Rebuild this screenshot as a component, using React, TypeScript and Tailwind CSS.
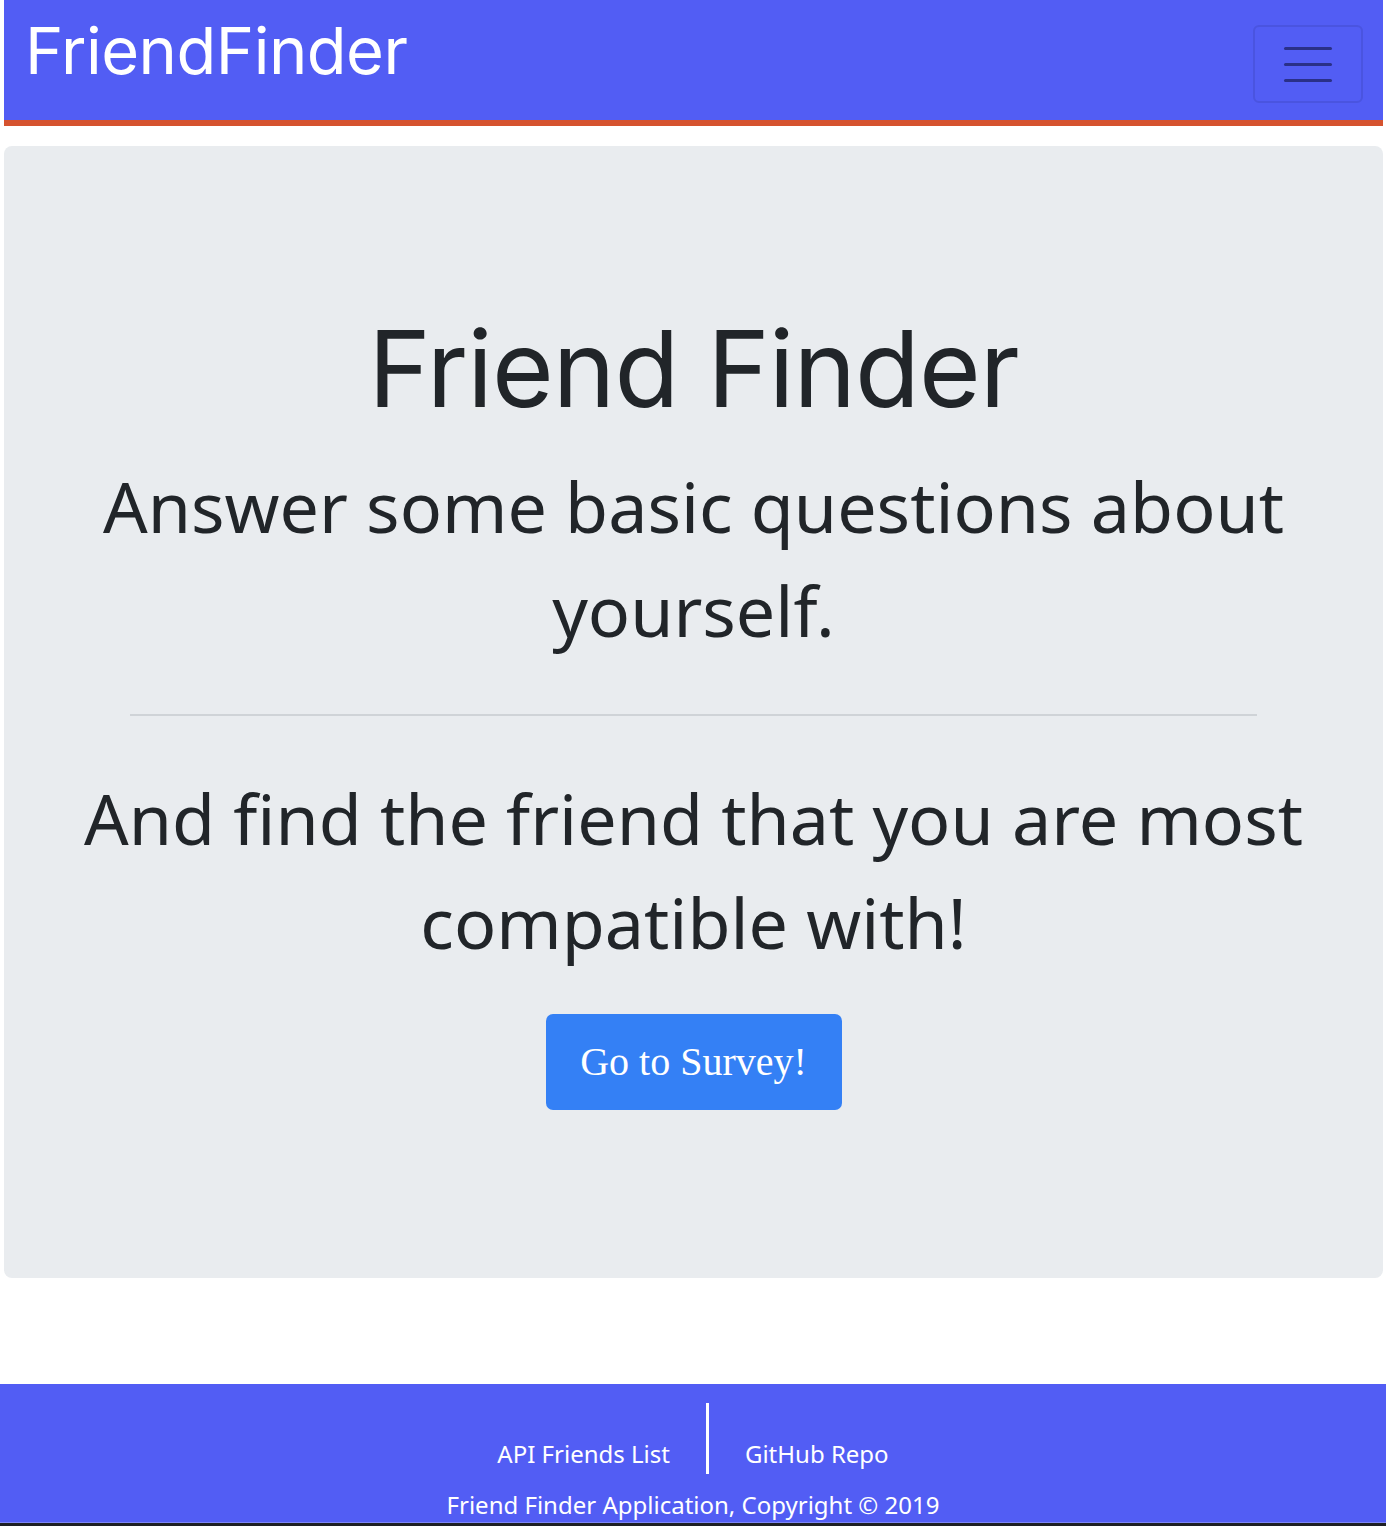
import React from 'react';

const Navbar: React.FC = () => (
  <header className="h-[126px] bg-[#525df4] border-b-[6px] border-[#d5532f] flex items-start justify-between pl-[21px] pr-[20px]">
    <a href="#" className="text-white text-[65px] leading-none mt-[18px] tracking-[-0.5px] font-['Inter',sans-serif]">
      FriendFinder
    </a>
    <button
      className="mt-[25px] w-[110px] h-[78px] rounded-[6px] border-2 border-[#4a54e0] flex flex-col items-center justify-center gap-[13px]"
      aria-label="Toggle navigation"
    >
      <span className="block w-[48px] h-[3px] rounded-full bg-[#2a3088]"></span>
      <span className="block w-[48px] h-[3px] rounded-full bg-[#2a3088]"></span>
      <span className="block w-[48px] h-[3px] rounded-full bg-[#2a3088]"></span>
    </button>
  </header>
);

const Jumbotron: React.FC = () => (
  <section className="mt-[20px] h-[1132px] rounded-[8px] bg-[#e9ecef] flex flex-col items-center text-[#212529] px-[80px] pt-[160px]">
    <h1 className="text-[106px] leading-[126px] tracking-[-1px] font-['Inter',sans-serif]">Friend Finder</h1>
    <p className="mt-[22px] text-[70px] leading-[104px] text-center font-['Noto_Sans',sans-serif]">
      Answer some basic questions about yourself.
    </p>
    <hr className="mt-[52px] w-[1127px] border-0 border-t-2 border-[#cfd3d7]" />
    <p className="mt-[50px] text-[70px] leading-[104px] text-center font-['Noto_Sans',sans-serif]">
      And find the friend that you are most compatible with!
    </p>
    <a
      href="#"
      className="mt-[40px] w-[296px] h-[96px] rounded-[7px] bg-[#3480f5] text-white text-[40px] flex items-center justify-center font-['Liberation_Serif',serif]"
    >
      Go to Survey!
    </a>
  </section>
);

const Footer: React.FC = () => (
  <footer className="mt-[106px]">
    <div className="h-[138px] bg-[#525df4] text-white font-['Noto_Sans',sans-serif] text-[24px] flex flex-col items-center">
      <div className="mt-[19px] flex items-end">
        <a href="#" className="leading-none pb-[8px] pr-[36px]">API Friends List</a>
        <div className="w-[3px] h-[71px] bg-white"></div>
        <a href="#" className="leading-none pb-[8px] pl-[36px]">GitHub Repo</a>
      </div>
      <p className="mt-[19px] leading-none">Friend Finder Application, Copyright © 2019</p>
    </div>
    <div className="h-[1px] bg-[#7d86f6]"></div>
    <div className="h-[3px] bg-[#1d1f24]"></div>
  </footer>
);

export default function App() {
  return (
    <div className="min-h-[1526px] bg-white">
      <div className="pl-[4px] pr-[3px]">
        <Navbar />
        <Jumbotron />
      </div>
      <Footer />
    </div>
  );
}
